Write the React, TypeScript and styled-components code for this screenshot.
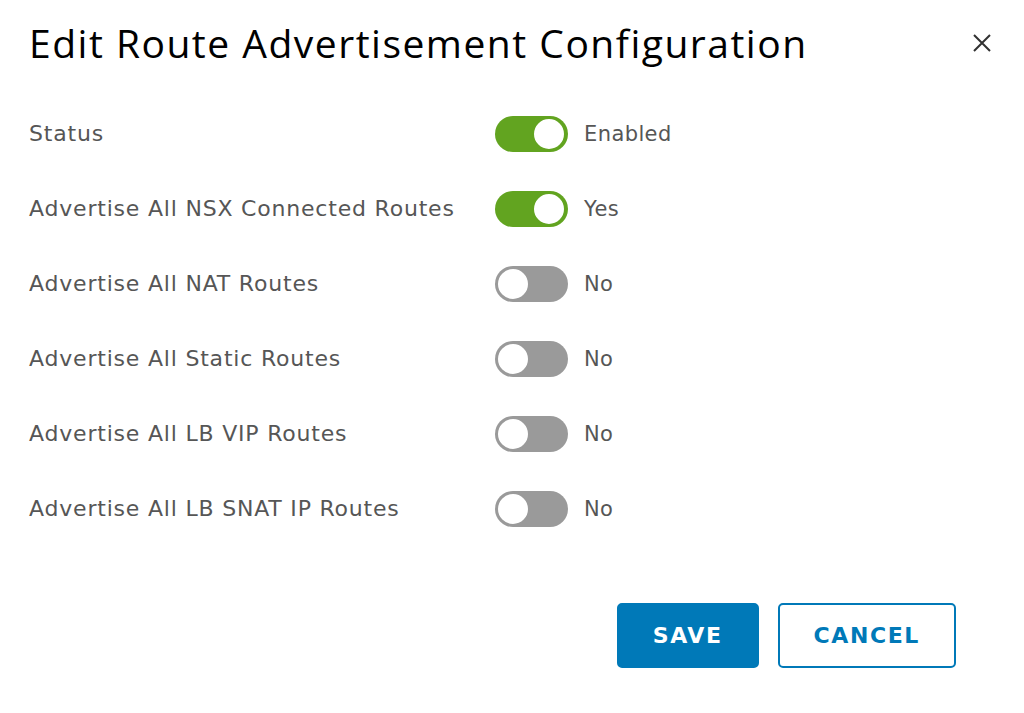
import styled, { createGlobalStyle } from 'styled-components'
import { Fragment, useState } from 'react'

const GlobalStyle = createGlobalStyle`
  html, body {
    margin: 0;
    padding: 0;
    background: #ffffff;
  }
  body {
    font-family: 'DejaVu Sans', 'Open Sans', sans-serif;
  }
`

const Dialog = styled.div`
  width: 1024px;
  height: 713px;
  box-sizing: border-box;
  padding: 18px 68px 0 29px;
  background: #ffffff;
`

const Header = styled.div`
  display: flex;
  align-items: center;
  justify-content: space-between;
  height: 50px;
  margin-right: -36px;
`

const Title = styled.h1`
  margin: 0;
  font-family: 'Open Sans', 'Noto Sans', sans-serif;
  font-size: 39px;
  font-weight: 400;
  line-height: 50px;
  color: #000000;
  letter-spacing: 1.5px;
`

const CloseButton = styled.button`
  width: 20px;
  height: 20px;
  padding: 0;
  border: none;
  background: none;
  display: flex;
  align-items: center;
  justify-content: center;
  cursor: pointer;
`

const Form = styled.div`
  margin-top: 28px;
  display: grid;
  grid-template-columns: 466px auto;
  grid-auto-rows: 75px;
  align-items: center;
`

const Label = styled.div`
  font-size: 22px;
  color: #565656;
  letter-spacing: 0.8px;
`

const ToggleCell = styled.label`
  display: flex;
  align-items: center;
  gap: 16px;
  cursor: pointer;
`

const Track = styled.span<{ $on: boolean }>`
  position: relative;
  width: 73px;
  height: 36px;
  border-radius: 18px;
  background: ${p => (p.$on ? '#62a420' : '#9a9a9a')};
  flex-shrink: 0;
`

const Knob = styled.span<{ $on: boolean }>`
  position: absolute;
  top: 1px;
  left: ${p => (p.$on ? '37px' : '1px')};
  width: 34px;
  height: 34px;
  box-sizing: border-box;
  border-radius: 50%;
  background: #ffffff;
  border: 2px solid ${p => (p.$on ? '#62a420' : '#9a9a9a')};
  transition: left 0.15s;
`

const Value = styled.span`
  font-size: 21px;
  color: #565656;
  letter-spacing: 0.4px;
`

const Footer = styled.div`
  margin-top: 57px;
  display: flex;
  justify-content: flex-end;
  gap: 19px;
`

const Button = styled.button<{ $primary?: boolean }>`
  height: 65px;
  padding: 0 34px;
  box-sizing: border-box;
  border-radius: 5px;
  border: 2px solid #0079b8;
  background: ${p => (p.$primary ? '#0079b8' : '#ffffff')};
  color: ${p => (p.$primary ? '#ffffff' : '#0079b8')};
  font-family: 'DejaVu Sans', 'Open Sans', sans-serif;
  font-size: 22px;
  font-weight: 700;
  letter-spacing: 1.6px;
  cursor: pointer;
`

const rows = [
  { label: 'Status', on: true, onText: 'Enabled', offText: 'Disabled' },
  { label: 'Advertise All NSX Connected Routes', on: true, onText: 'Yes', offText: 'No' },
  { label: 'Advertise All NAT Routes', on: false, onText: 'Yes', offText: 'No' },
  { label: 'Advertise All Static Routes', on: false, onText: 'Yes', offText: 'No' },
  { label: 'Advertise All LB VIP Routes', on: false, onText: 'Yes', offText: 'No' },
  { label: 'Advertise All LB SNAT IP Routes', on: false, onText: 'Yes', offText: 'No' },
]

export default function App() {
  const [values, setValues] = useState(rows.map(r => r.on))

  const flip = (i: number) => setValues(v => v.map((x, j) => (j === i ? !x : x)))

  return (
    <>
      <GlobalStyle />
      <Dialog>
        <Header>
          <Title>Edit Route Advertisement Configuration</Title>
          <CloseButton aria-label="Close">
            <svg width="20" height="20" viewBox="0 0 20 20">
              <path d="M2 2 L18 18 M18 2 L2 18" stroke="#313131" strokeWidth="2" />
            </svg>
          </CloseButton>
        </Header>

        <Form>
          {rows.map((r, i) => (
            <Fragment key={r.label}>
              <Label>{r.label}</Label>
              <ToggleCell onClick={() => flip(i)}>
                <Track $on={values[i]}>
                  <Knob $on={values[i]} />
                </Track>
                <Value>{values[i] ? r.onText : r.offText}</Value>
              </ToggleCell>
            </Fragment>
          ))}
        </Form>

        <Footer>
          <Button $primary>SAVE</Button>
          <Button>CANCEL</Button>
        </Footer>
      </Dialog>
    </>
  )
}
